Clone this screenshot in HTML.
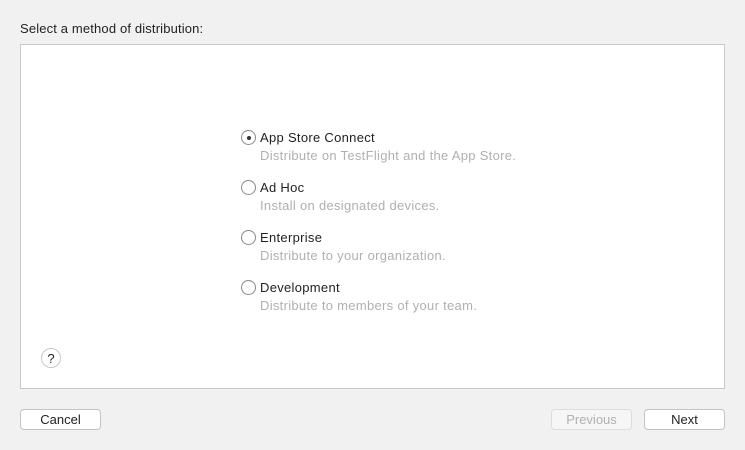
<!DOCTYPE html>
<html><head><style>
body{margin:0;width:745px;height:450px;background:#f1f1f1;font-family:"Liberation Sans",sans-serif;position:relative;overflow:hidden}
.t{position:absolute;left:20px;top:21px;font-size:13px;color:#222;letter-spacing:0.15px}
.box{position:absolute;left:20px;top:44px;width:703px;height:343px;background:#fff;border:1px solid #c8c8c8}
.r{position:absolute;left:241px;width:15px;height:15px;border:1px solid #8a8a8a;border-radius:50%;background:#fff;box-sizing:border-box}
.r.on::after{content:"";position:absolute;left:4.5px;top:4.5px;width:4px;height:4px;border-radius:50%;background:#333}
.l{position:absolute;left:260px;font-size:13px;color:#222;letter-spacing:0.3px}
.s{position:absolute;left:260px;font-size:13px;color:#b0b0b0;letter-spacing:0.3px}
.q{position:absolute;left:41px;top:348px;width:20px;height:20px;border:1px solid #c8c8c8;border-radius:50%;background:#fff;box-sizing:border-box;font-size:13px;text-align:center;line-height:19px;color:#222}
.b{position:absolute;top:409px;width:81px;height:21px;background:#fff;border:1px solid #c4c4c4;border-radius:4px;box-sizing:border-box;font-size:13px;text-align:center;line-height:19px;color:#222}
.b.d{background:#f6f6f6;color:#b0b0b0;border-color:#ddd}
</style></head><body>
<div class="t">Select a method of distribution:</div>
<div class="box"></div>
<div class="r on" style="top:130px"></div><div class="l" style="top:130px">App Store Connect</div><div class="s" style="top:148px">Distribute on TestFlight and the App Store.</div>
<div class="r" style="top:180px"></div><div class="l" style="top:180px">Ad Hoc</div><div class="s" style="top:198px">Install on designated devices.</div>
<div class="r" style="top:230px"></div><div class="l" style="top:230px">Enterprise</div><div class="s" style="top:248px">Distribute to your organization.</div>
<div class="r" style="top:280px"></div><div class="l" style="top:280px">Development</div><div class="s" style="top:298px">Distribute to members of your team.</div>
<div class="q">?</div>
<div class="b" style="left:20px">Cancel</div>
<div class="b d" style="left:551px">Previous</div>
<div class="b" style="left:644px">Next</div>
</body></html>
